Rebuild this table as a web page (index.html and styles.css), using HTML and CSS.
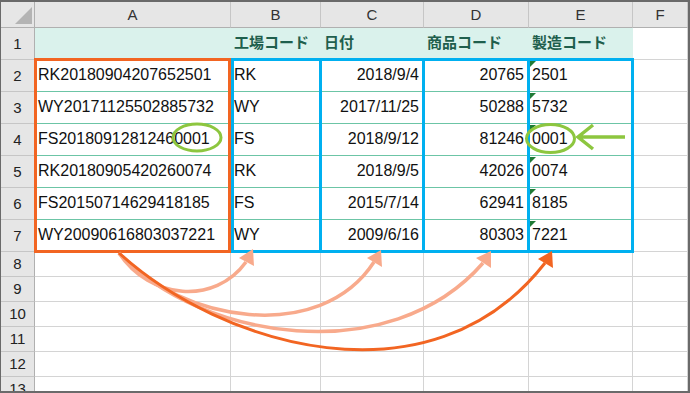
FILE: index.html
```html
<!DOCTYPE html>
<html lang="ja">
<head>
<meta charset="utf-8">
<title>Excel</title>
<link rel="stylesheet" href="styles.css">
</head>
<body>
<div class="page">
  <div class="sheet">
    <div class="corner"></div>
    <div class="ch">A</div><div class="ch">B</div><div class="ch">C</div><div class="ch">D</div><div class="ch">E</div><div class="ch">F</div>

    <div class="rh">1</div>
    <div class="hd"></div><div class="hd">工場コード</div><div class="hd">日付</div><div class="hd">商品コード</div><div class="hd">製造コード</div><div class="c"></div>

    <div class="rh">2</div>
    <div class="t">RK20180904207652501</div><div class="t">RK</div><div class="t r">2018/9/4</div><div class="t r">20765</div><div class="t err">2501</div><div class="c"></div>

    <div class="rh">3</div>
    <div class="t">WY20171125502885732</div><div class="t">WY</div><div class="t r">2017/11/25</div><div class="t r">50288</div><div class="t err">5732</div><div class="c"></div>

    <div class="rh">4</div>
    <div class="t">FS20180912812460001</div><div class="t">FS</div><div class="t r">2018/9/12</div><div class="t r">81246</div><div class="t err">0001</div><div class="c"></div>

    <div class="rh">5</div>
    <div class="t">RK20180905420260074</div><div class="t">RK</div><div class="t r">2018/9/5</div><div class="t r">42026</div><div class="t err">0074</div><div class="c"></div>

    <div class="rh">6</div>
    <div class="t">FS20150714629418185</div><div class="t">FS</div><div class="t r">2015/7/14</div><div class="t r">62941</div><div class="t err">8185</div><div class="c"></div>

    <div class="rh">7</div>
    <div class="t">WY20090616803037221</div><div class="t">WY</div><div class="t r">2009/6/16</div><div class="t r">80303</div><div class="t err">7221</div><div class="c"></div>

    <div class="rh">8</div><div class="c"></div><div class="c"></div><div class="c"></div><div class="c"></div><div class="c"></div><div class="c"></div>
    <div class="rh">9</div><div class="c"></div><div class="c"></div><div class="c"></div><div class="c"></div><div class="c"></div><div class="c"></div>
    <div class="rh">10</div><div class="c"></div><div class="c"></div><div class="c"></div><div class="c"></div><div class="c"></div><div class="c"></div>
    <div class="rh">11</div><div class="c"></div><div class="c"></div><div class="c"></div><div class="c"></div><div class="c"></div><div class="c"></div>
    <div class="rh">12</div><div class="c"></div><div class="c"></div><div class="c"></div><div class="c"></div><div class="c"></div><div class="c"></div>
    <div class="rh">13</div><div class="c"></div><div class="c"></div><div class="c"></div><div class="c"></div><div class="c"></div><div class="c"></div>
  </div>

  <div class="box box-a"></div>
  <div class="box box-b"></div>
  <div class="box box-c"></div>
  <div class="box box-d"></div>
  <div class="box box-e"></div>

  <svg class="overlay" width="690" height="393" viewBox="0 0 690 393">
    <ellipse cx="197" cy="137.5" rx="24" ry="13.5" fill="none" stroke="#8dc63f" stroke-width="3"/>
    <ellipse cx="550.5" cy="138.5" rx="24" ry="14" fill="none" stroke="#8dc63f" stroke-width="3"/>
    <path d="M578,137 H625 M593,125 L578,137 L593,149" fill="none" stroke="#8dc63f" stroke-width="3.5"/>

    <g fill="none" stroke="#f8aa8c" stroke-width="3.5">
      <path d="M119,253 C150,300 215,305 246,262"/>
      <path d="M119,253 C180,322 320,345 374,262"/>
      <path d="M119,253 C200,340 390,370 483,263"/>
    </g>
    <g fill="#f8aa8c">
      <polygon points="253,249 239,258 254,266"/>
      <polygon points="381,250 367,258 382,267"/>
      <polygon points="491,251 476,258 491,268"/>
    </g>
    <path d="M119,253 C220,345 430,410 545,263" fill="none" stroke="#f26522" stroke-width="3"/>
    <polygon points="552,251 538,259 553,268" fill="#f26522"/>
  </svg>
</div>
</body>
</html>
```
FILE: styles.css
```css
html, body {
  margin: 0;
  padding: 0;
  background: #fff;
}

.page {
  position: relative;
  width: 690px;
  height: 393px;
  overflow: hidden;
  font-family: "Liberation Sans", Arial, sans-serif;
}

.sheet {
  box-sizing: border-box;
  width: 690px;
  height: 393px;
  border: 2px solid #6a6a6a;
  border-left-width: 1px;
  display: grid;
  grid-template-columns: 34px 196px 90px 103px 105px 104px 1fr;
  grid-template-rows: 26px repeat(7, 32px) repeat(6, 25px);
  overflow: hidden;
  background: #fff;
}

.sheet > div {
  box-sizing: border-box;
  border-right: 1px solid #d4d4d4;
  border-bottom: 1px solid #d4d4d4;
  display: flex;
  align-items: center;
  white-space: nowrap;
  overflow: hidden;
  font-size: 16px;
  color: #111;
  padding: 0 4px 2px 3px;
}

.sheet > .corner {
  position: relative;
  background: #e6e6e6;
  border-right-color: #b0b0b0;
  border-bottom-color: #b0b0b0;
}

.corner::after {
  content: "";
  position: absolute;
  right: 2px;
  bottom: 3px;
  width: 0;
  height: 0;
  border-left: 17px solid transparent;
  border-bottom: 17px solid #b4b4b4;
}

.sheet > .ch {
  background: #e6e6e6;
  justify-content: center;
  font-size: 15px;
  color: #333;
  padding: 0;
  border-right-color: #c6c6c6;
  border-bottom-color: #b0b0b0;
}

.sheet > .rh {
  background: #e6e6e6;
  justify-content: center;
  font-size: 15px;
  color: #222;
  padding: 0 0 1px 0;
  border-right-color: #b0b0b0;
  border-bottom-color: #c6c6c6;
}

.sheet > .hd {
  background: #daf2ec;
  border-right-color: #daf2ec;
  border-bottom-color: #6cc5a6;
  font-family: "Noto Sans CJK JP", "Liberation Sans", sans-serif;
  font-weight: bold;
  font-size: 15px;
  color: #1f5f4d;
  padding-bottom: 4px;
}

.sheet > .t {
  border-bottom-color: #6cc5a6;
}

.sheet > .r {
  justify-content: flex-end;
}

.sheet > .err {
  position: relative;
}

.err::before {
  content: "";
  position: absolute;
  left: 1px;
  top: 1px;
  width: 0;
  height: 0;
  border-top: 6px solid #1f7a35;
  border-right: 6px solid transparent;
}

.box {
  position: absolute;
  top: 58px;
  height: 195px;
  box-sizing: border-box;
  border: 3px solid #00b0f0;
}

.box-a { left: 34px; width: 197px; border-color: #f26522; }
.box-b { left: 231px; width: 91px; }
.box-c { left: 319px; width: 106px; }
.box-d { left: 422px; width: 108px; }
.box-e { left: 527px; width: 107px; }

.overlay {
  position: absolute;
  left: 0;
  top: 0;
  pointer-events: none;
}
```
